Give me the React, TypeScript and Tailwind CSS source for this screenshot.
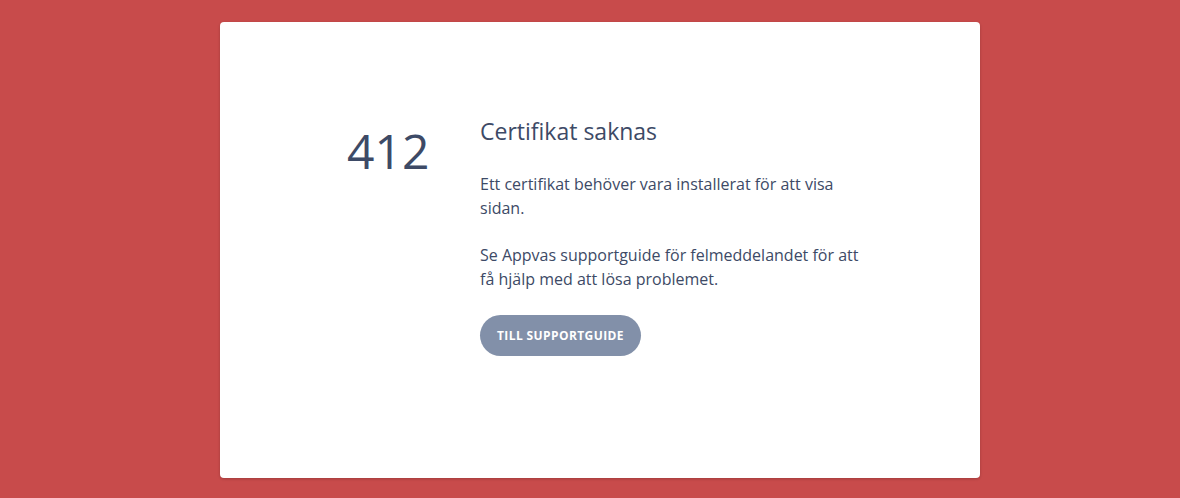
export default function App() {
  return (
    <div className="min-h-[498px] w-full bg-[#c84b4b] pt-[22px] pb-[20px] pl-[20px] flex justify-center" style={{ fontFamily: '"Segoe UI", "Open Sans", sans-serif' }}>
      <div className="w-[760px] h-[456px] bg-white rounded shadow-[0_1px_3px_rgba(0,0,0,0.2)] flex justify-start pl-[127px] pt-[93px] text-[#3d4a66]">
        <div className="flex gap-[53px]">
          <div className="w-[80px] text-[48px] leading-none pt-[12px]">412</div>
          <div className="w-[388px]">
            <h1 className="text-[23px] leading-[32px] font-normal">Certifikat saknas</h1>
            <p className="mt-[25px] text-[16px] leading-[24px]">
              Ett certifikat behöver vara installerat för att visa sidan.
            </p>
            <p className="mt-[23px] text-[16px] leading-[24px]">
              Se Appvas supportguide för felmeddelandet för att få hjälp med att lösa problemet.
            </p>
            <button className="mt-[24px] h-[41px] px-[17px] rounded-full bg-[#8290a9] text-white text-[12px] font-bold tracking-[0.4px]">
              TILL SUPPORTGUIDE
            </button>
          </div>
        </div>
      </div>
    </div>
  );
}
